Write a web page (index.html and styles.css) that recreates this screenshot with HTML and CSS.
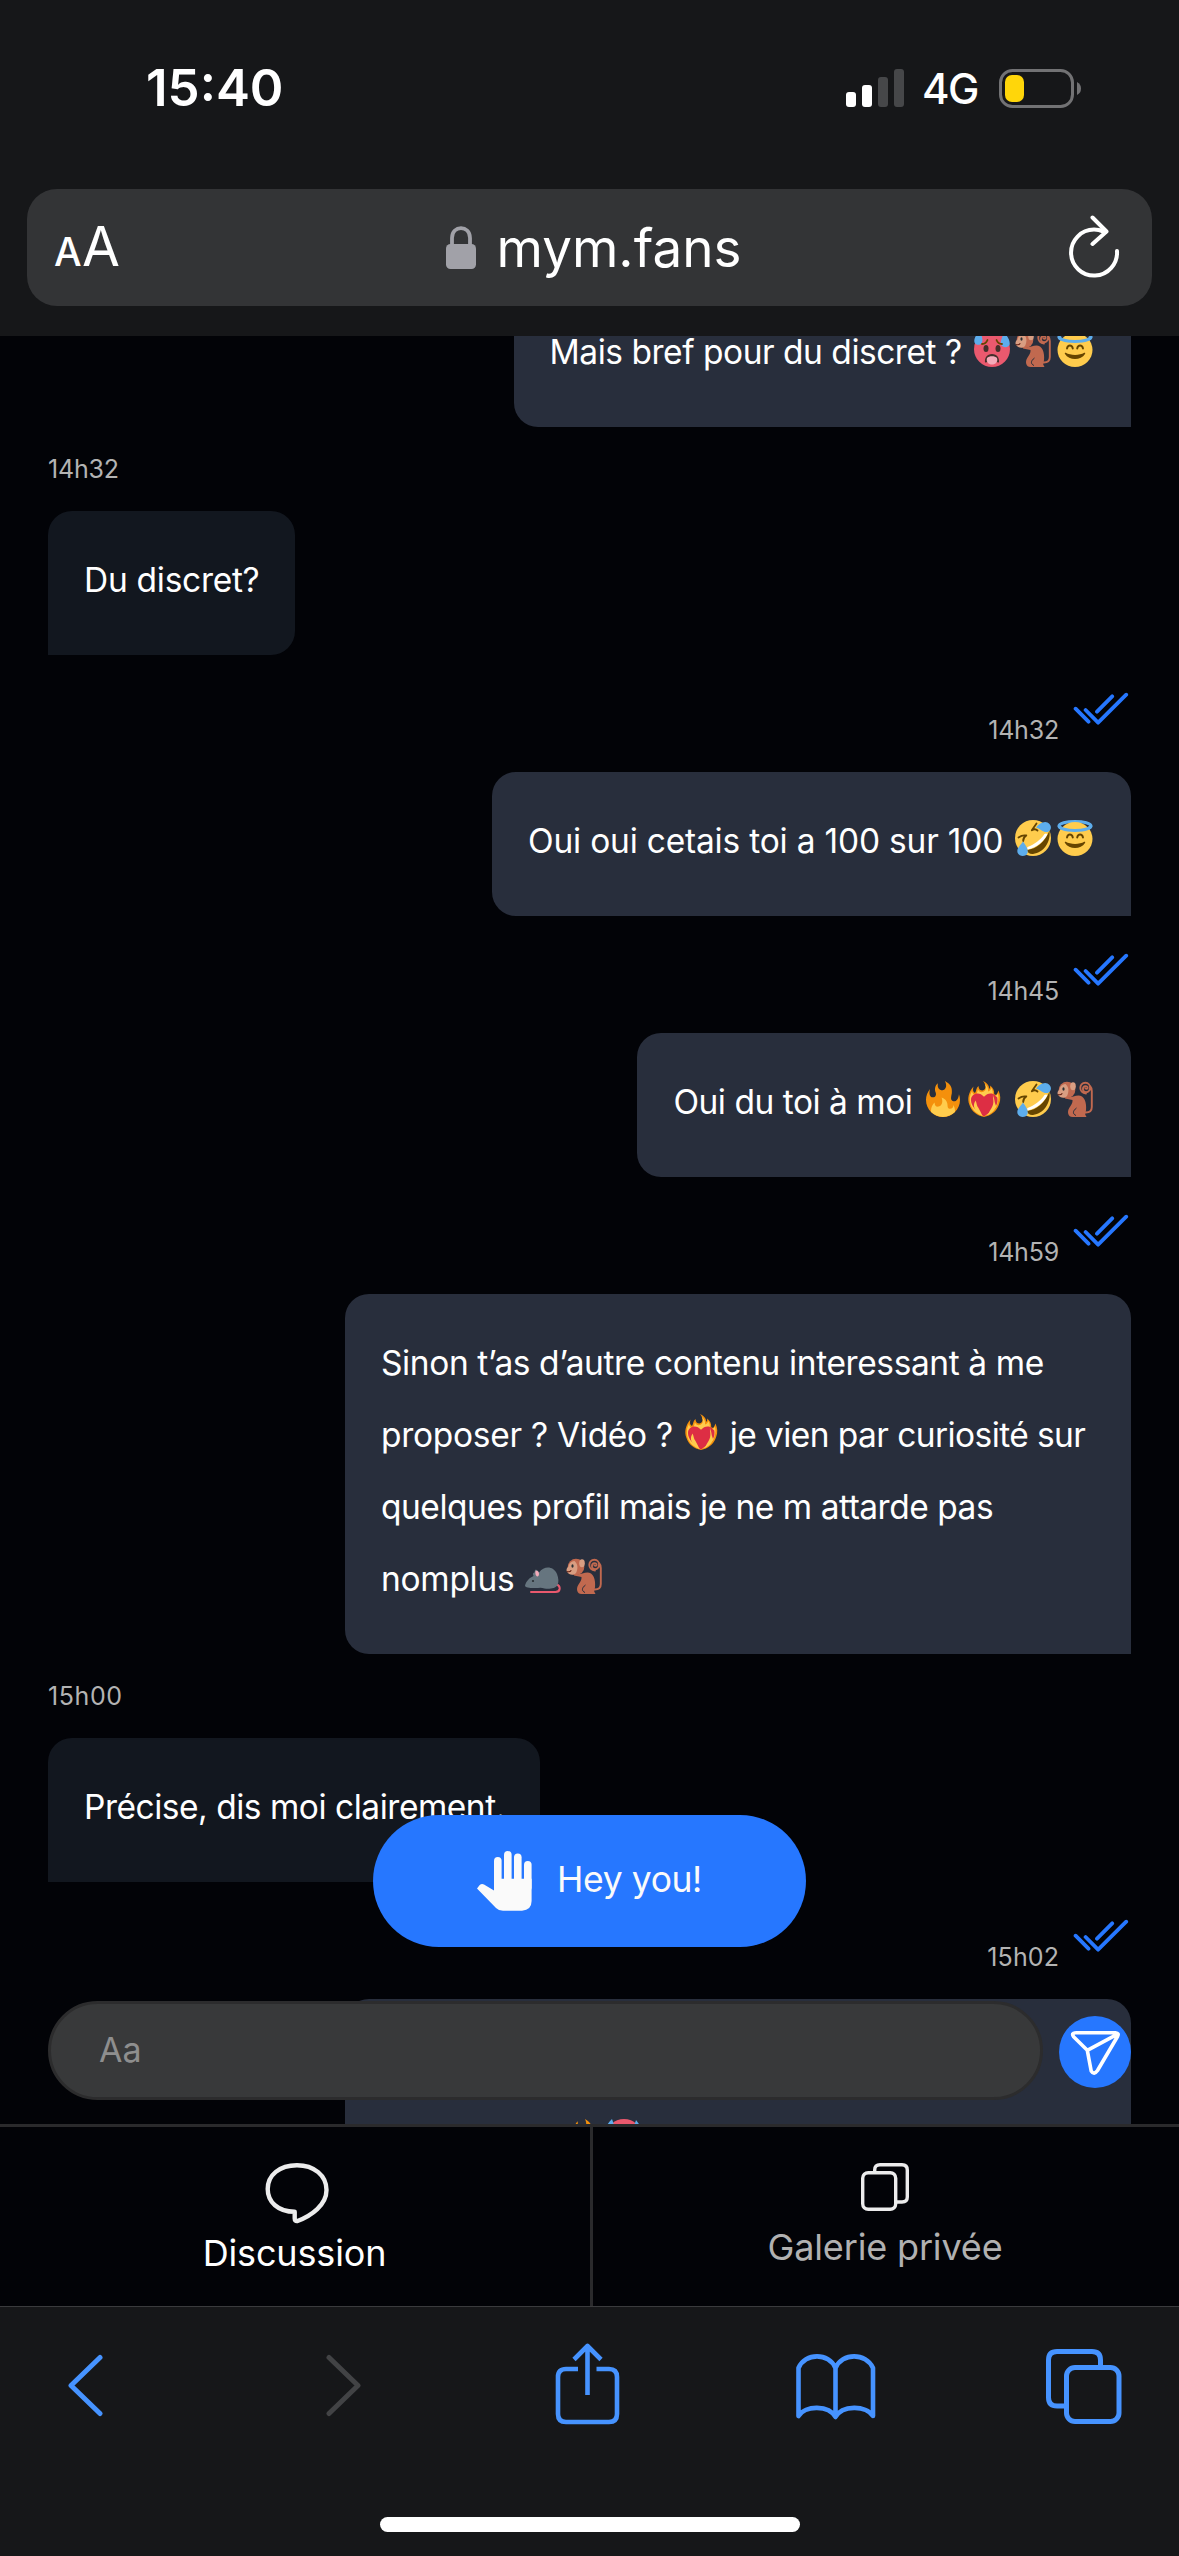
FILE: index.html
```html
<!DOCTYPE html>
<html lang="fr">
<head>
<meta charset="utf-8">
<title>mym.fans</title>
<link rel="stylesheet" href="styles.css">
</head>
<body>
<svg class="sprite" aria-hidden="true">
  <symbol id="checks" viewBox="0 0 56 33">
    <path d="M2.6 16.7L15.5 29.7M12.6 18L25.1 30.7L53.2 2.7M24 19.7L39.2 4.3" fill="none" stroke="#2677ff" stroke-width="3.8" stroke-linecap="round" stroke-linejoin="round"/>
  </symbol>
  <symbol id="fire" viewBox="0 0 36 36">
    <path fill="#f4900c" d="M35 19c0-2.062-.367-4.039-1.04-5.868-.46 5.389-3.333 8.157-6.335 6.868-2.812-1.208-.917-5.917-.777-8.164.236-3.809-.012-8.169-6.931-11.794 2.875 5.5.333 8.917-2.333 9.125-2.958.231-5.667-2.542-4.667-7.042-3.238 2.386-3.332 6.402-2.333 9 1.042 2.708-.042 4.958-2.583 5.208-2.84.28-4.418-3.041-2.963-8.333C2.52 10.965 1 14.805 1 19c0 9.389 7.611 17 17 17s17-7.611 17-17z"/>
    <path fill="#ffcc4d" d="M28.394 23.999c.148 3.084-2.561 4.293-4.019 3.709-2.106-.843-1.541-2.291-2.083-5.291s-2.625-5.083-5.708-6c2.25 6.333-1.247 8.667-3.08 9.084-1.872.426-3.753-.001-3.968-4.007C7.352 23.668 6 26.676 6 30c0 .368.023.73.055 1.09C9.125 34.124 13.342 36 18 36s8.875-1.876 11.945-4.91c.032-.36.055-.722.055-1.09 0-2.187-.584-4.236-1.606-6.001z"/>
  </symbol>
  <symbol id="heart-fire" viewBox="0 0 36 36">
    <path fill="#f4900c" d="M17 0c4 2 6.500 4.500 6 8 1-.8 1.500-2 1-3.500 3 2 4.500 5 4.200 8.500 1.500 1.500 2.500 1.500 4.300-3.500 2 4.500 2.500 9 .5 14C30.500 30.500 25 34.500 18 36 11 34.500 5.500 30.500 3.300 23.500 1.300 18 2.300 11.500 7.500 5.500 6.500 9 7 11 9 12c1.500-2.500 1-5 3.500-7 .2 3 1.500 4.500 4 4.500C20.500 8.500 20.500 4 17 0z"/>
    <path fill="#ffcc4d" d="M18.500 2.500c3 2.500 4 5 3.500 8 1.500-.5 3-2 3.500-3.500 1.500 2.500 1.500 5 1 7.500 2 1 4 .5 5.500-2 .8 3.500.8 7-.8 11C28.800 29.500 24.500 33.500 18 35 11 33.500 6.500 29.500 4.600 23.500 3.200 19 3.500 14 6 10c.3 2.500 1.500 3.500 3.500 4 2-2 2-4 2.300-5.500 1.200 2 2.700 3 5 2.500 3.200-1 4.200-4.500 1.700-8.500z"/>
    <path fill="#dd2e44" d="M18 35.500C10 30 5 25 5 19c0-7 8.500-9 13-3.200C22.500 10 31 12 31 19c0 6-5 11-13 16.500z"/>
    <path fill="#ffcc4d" d="M9.500 19.500c1.500 3 1 5 3 7.500 1.500 2.500 2.500 5 4 8C12 33 8.500 29 8 25.500c-.3-2.500.5-4 1.500-6zM27 13c-.5 4.500 1.500 7.500-.5 12-1.200 3-3.500 5.500-4.500 9 4.500-2.500 8.500-7 9.200-12C30 20 27 17.500 27 13z"/>
    <path fill="#dd2e44" d="M31 15.500c1 3.500.5 6.500-1 9.500-.8-2.800-2-4.500-1.500-8z"/>
  </symbol>
  <symbol id="rofl" viewBox="0 0 36 36">
    <circle cx="18" cy="18" r="18" fill="#ffcc4d"/>
    <path fill="#664500" d="M34.500 10.500C36 22 29 32.500 18 34c-3 .3-5.500-1-6-4 9-1 18-8 22.500-19.500z"/>
    <path fill="#fff" d="M32.300 14.500c-4 7.500-10.500 13-19.300 15-1-.5-1-1.500-.5-2.500C19.500 24.500 25.500 20 29.500 14c1-.8 2.300-.8 2.800.5z"/>
    <path fill="none" stroke="#664500" stroke-width="1.800" stroke-linecap="round" stroke-linejoin="round" d="M21.500 3.500L16.800 10.300C19 8.800 21 9 22.500 10.500M3.500 17.500C6.500 15.300 9 15 11.300 15.500 9 17 8 18.500 8.200 21"/>
    <path fill="#5dadec" d="M21 7.500C24 3.500 29 .8 32.500 2.500c4 2 4.500 6.500 1.500 8.700-4.500 2.700-8-2-13-3.700zM8 21.500c3 4 6 8.500 4.200 12.200-2.200 3.300-7.700 2.800-9.500-.7C1 28.500 5.500 25.500 8 21.500z"/>
  </symbol>
  <symbol id="halo" viewBox="0 0 36 36">
    <ellipse cx="18" cy="6" rx="16" ry="4.500" fill="none" stroke="#5dadec" stroke-width="3"/>
    <ellipse cx="18" cy="19" rx="17.500" ry="17" fill="#ffcc4d"/>
    <path fill="none" stroke="#5dadec" stroke-width="3" d="M2 5.500C3 12 33 12 34 5.500"/>
    <path fill="none" stroke="#664500" stroke-width="1.900" stroke-linecap="round" d="M10 17.500C10.800 13.500 15 13.500 15.800 17.500M20.200 17.500C21 13.500 25.200 13.500 26 17.500"/>
    <path fill="#664500" d="M8.800 21.800c4.500 2.800 14 2.800 18.400 0 1-.3 1.300.5.800 1.300-4 6.600-16 6.600-20 0-.5-.8-.2-1.600.8-1.300z"/>
  </symbol>
  <symbol id="hot" viewBox="0 0 36 36">
    <circle cx="18" cy="18" r="18" fill="#ea596e"/>
    <path fill="#5dadec" d="M6 0C2 3.500-.5 8 .5 11.500c1.500 3.500 7 3 7.800-1C9 7 7 3.500 6 0zM30 1c3 4 6.500 8.500 5.600 12.500-1.500 3.500-7 3.500-8.600 0C26 9.500 29 5 30 1z"/>
    <path fill="none" stroke="#664500" stroke-width="1.800" stroke-linecap="round" d="M8 13c3 0 4.500-1.500 5.500-4M28 13c-3 0-4.500-1.500-5.500-4"/>
    <ellipse cx="12" cy="17.500" rx="2.500" ry="3.500" fill="#442f2a"/><ellipse cx="24" cy="17.500" rx="2.500" ry="3.500" fill="#442f2a"/>
    <path fill="#442f2a" d="M18 23c5 0 7.500 4 7 8.500-4-1-10-1-14 0C10.500 27 13 23 18 23z"/>
    <path fill="#f4abba" d="M13 27c2-2.500 8-2.500 10 0 1.200 4-1.500 6.500-5 6.500S11.800 31 13 27z"/>
  </symbol>
  <symbol id="monkey" viewBox="0 0 36 36">
    <path fill="none" stroke="#c1694f" stroke-width="1.900" stroke-linecap="round" stroke-linejoin="round" d="M28.500 7.500C31 9 31.500 5 28.500 5.200C25 5.500 25 11 29 11.200C34.500 11.200 34.500 1.800 28.500 1.800C21.500 1.800 21.500 12 29 12.500M33 5Q34.800 7 34.800 10V26c0 3.500-2 5.500-6 5.500"/>
    <circle cx="10" cy="9" r="8.300" fill="#c1694f"/>
    <path fill="#c1694f" d="M8 16C14 18 20 12.500 25 15.500c4.500 3 5 12.500 3.200 18L29.500 36H15.500C11 36 10 31 12 27.500c1.500-3 3.800-5 3.500-8.500L8 17.500z"/>
    <path fill="none" stroke="#282e3c" stroke-width="1" d="M19.500 27c-4 3-4 6-.5 7.500"/>
    <path fill="#d99e82" d="M8.500 3C4.500 3.500 3 6 2.500 8.500.5 10 0 12 1 13.800 3 17.500 9 18 10.500 14c1.500-4 1.500-8-2-11z"/>
    <ellipse cx="16" cy="5.300" rx="2.800" ry="4" fill="#d99e82"/>
    <ellipse cx="6.500" cy="8" rx="1.100" ry="1.700" fill="#292f33"/>
    <path fill="none" stroke="#662113" stroke-width="1.100" d="M.8 13.500Q4 14.500 5.300 12.200"/>
  </symbol>
  <symbol id="mouse" viewBox="0 0 36 36">
    <path fill="none" stroke="#ea596e" stroke-width="2" stroke-linecap="round" d="M32 26.500c4 2 3.500 7.500-1.500 7.500H6"/>
    <path fill="#66757f" d="M0 27.500c1.500-5 5-8 8.500-9.500-1-2-.5-3.500 1-3.500l.5-2.500c2-1 3 1 4 2.500C19 8 28 7.500 32 16c1.500 4 2 8 .5 11-2 4-9 4-13 3.500C15 29 13 30.500 9 30 4.500 30 0 29.500 0 27.500z"/>
    <path fill="#f4abba" d="M10.500 13c2-1 3.500 1 3.500 3 0 1.500-1 3-2 2.500-1.500-1-2-3.500-1.500-5.500z"/>
    <circle cx="8" cy="23" r="1.100" fill="#292f33"/>
  </symbol>
</svg>

<header class="browser-top">
  <div class="status">
    <span class="clock">15:40</span>
    <div class="status-right">
      <svg class="signal" width="58" height="38" viewBox="0 0 58 38"><g fill="#fff"><rect y="23" width="10" height="15" rx="3"/><rect x="16" y="16" width="10" height="22" rx="3"/></g><g fill="#464749"><rect x="32" y="8" width="10" height="30" rx="3"/><rect x="48" width="10" height="38" rx="3"/></g></svg>
      <span class="network">4G</span>
      <svg class="battery" width="83" height="39" viewBox="0 0 83 39"><rect x="1.500" y="1.500" width="72" height="36" rx="12" fill="none" stroke="#727274" stroke-width="3"/><rect x="6" y="6" width="19" height="27" rx="7" fill="#ffd60a"/><path d="M78 13q4 2 4 6.500t-4 6.500z" fill="#727274"/></svg>
    </div>
  </div>
  <div class="url-bar">
    <span class="reader"><span class="small-a">A</span><span class="big-a">A</span></span>
    <span class="address">
      <svg width="30" height="43" viewBox="0 0 30 43"><rect y="18" width="30" height="25" rx="4.500" fill="#a1a1a8"/><path d="M6 19V12C6 -1.300 24 -1.300 24 12V19" fill="none" stroke="#a1a1a8" stroke-width="3.800"/></svg>
      <span class="domain">mym.fans</span>
    </span>
    <svg class="reload" width="54" height="64" viewBox="0 0 54 64"><path d="M36 17.500C33 16 30 15.600 27 15.600A23 23 0 1 0 50 37M25.500 3.500L39.500 17.500L25.500 30" fill="none" stroke="#fff" stroke-width="4" stroke-linecap="round" stroke-linejoin="round"/></svg>
  </div>
</header>

<main class="chat">
  <div class="thread">
    <div class="bubble mine"><span class="tight">Mais bref pour du discret ?</span> <svg class="emoji"><use href="#hot"/></svg><svg class="emoji"><use href="#monkey"/></svg><svg class="emoji"><use href="#halo"/></svg></div>

    <div class="meta">14h32</div>
    <div class="bubble theirs"><span class="snug">Du discret?</span></div>

    <div class="meta sent"><span>14h32</span><svg class="checks"><use href="#checks"/></svg></div>
    <div class="bubble mine"><span class="oui">Oui oui cetais toi a 100 sur 100</span> <svg class="emoji"><use href="#rofl"/></svg><svg class="emoji"><use href="#halo"/></svg></div>

    <div class="meta sent"><span>14h45</span><svg class="checks"><use href="#checks"/></svg></div>
    <div class="bubble mine"><span class="tight">Oui du toi à moi</span> <svg class="emoji"><use href="#fire"/></svg><svg class="emoji"><use href="#heart-fire"/></svg><span class="thin"> </span><svg class="emoji"><use href="#rofl"/></svg><svg class="emoji"><use href="#monkey"/></svg></div>

    <div class="meta sent"><span>14h59</span><svg class="checks"><use href="#checks"/></svg></div>
    <div class="bubble mine wide"><span class="sinon">Sinon t’as d’autre contenu interessant à me</span><br><span class="snug">proposer ? Vidéo ?</span><span class="thin"> </span><svg class="emoji"><use href="#heart-fire"/></svg><span class="thin"> </span><span class="curieux">je vien par curiosité sur</span><br><span class="tight">quelques profil mais je ne m attarde pas</span><br><span class="snug">nomplus</span><span class="thin"> </span><svg class="emoji"><use href="#mouse"/></svg><svg class="emoji"><use href="#monkey"/></svg></div>

    <div class="meta loose">15h00</div>
    <div class="bubble theirs"><span class="tight">Précise, dis moi clairement.</span></div>

    <div class="meta sent"><span class="zero">15h02</span><svg class="checks"><use href="#checks"/></svg></div>
    <div class="bubble mine wide last"><br><svg class="emoji"><use href="#fire"/></svg><svg class="emoji"><use href="#hot"/></svg></div>
  </div>

  <button class="hey">
    <svg width="55" height="60" viewBox="0 0 55 60" fill="#fafafa"><rect x="17" y="6" width="7.600" height="30" rx="3.800"/><rect x="27" width="7.600" height="36" rx="3.800"/><rect x="37" y="2.500" width="7.600" height="32" rx="3.800"/><rect x="47" y="10" width="7.600" height="30" rx="3.800"/><path d="M17 39.500L7 33.400Q4.500 32.200 2.500 34.300L0 37.500L19 57Q21.500 59.700 26 59.700H45Q54.600 59 54.600 50V27.700H17Z"/></svg>
    <span>Hey you!</span>
  </button>

  <div class="composer">
    <div class="field">Aa</div>
    <svg class="send" width="72" height="72" viewBox="0 0 72 72"><circle cx="36" cy="36" r="36" fill="#2677ff"/><path d="M16.500 16.700H56.500Q60.500 17 58.500 20.500L38.500 54.500Q35 59.500 32.200 55L28.300 34.300L14.600 20.700Q12 17 16.500 16.700M28.300 34.300L58.500 18.200" fill="none" stroke="#fff" stroke-width="3.600" stroke-linejoin="round"/></svg>
  </div>
</main>

<nav class="tabs">
  <div class="tab active">
    <svg width="68" height="66" viewBox="0 0 68 66"><path d="M34 5.200C51 5.200 63.500 15.500 63.500 30C63.500 45 48.500 55.500 34.500 61Q31.700 61.500 31.700 58.500V51.800C15 51.800 4.700 42 4.700 29C4.700 15 16.500 5.200 34 5.200Z" fill="none" stroke="#ececec" stroke-width="4.400" stroke-linejoin="round"/></svg>
    <span>Discussion</span>
  </div>
  <div class="tab">
    <svg width="48" height="48" viewBox="0 0 48 48" fill="none" stroke="#ececec" stroke-width="3.400"><rect x="1.700" y="9.700" width="33" height="36.600" rx="5.500"/><path d="M13.700 9.700V7Q13.700 1.700 19 1.700H41Q46.300 1.700 46.300 7V34Q46.300 39 41 39H35"/></svg>
    <span>Galerie privée</span>
  </div>
</nav>

<footer class="browser-bottom">
  <div class="tools">
    <svg width="36" height="84" viewBox="0 0 36 84"><path d="M33 15.500L4 43.500L33 71.500" fill="none" stroke="#4693ff" stroke-width="5" stroke-linecap="round" stroke-linejoin="round"/></svg>
    <svg width="36" height="84" viewBox="0 0 36 84"><path d="M4 15.500L33 43.500L4 71.500" fill="none" stroke="#424345" stroke-width="5" stroke-linecap="round" stroke-linejoin="round"/></svg>
    <svg width="66" height="84" viewBox="0 0 66 84"><path d="M23 27H11Q3 27 3 35V72Q3 80 11 80H54Q62 80 62 72V35Q62 27 54 27H41.500M32.500 53V4.500M19 17.500L32.500 4L46 17.500" fill="none" stroke="#4693ff" stroke-width="4.600" stroke-linecap="butt" stroke-linejoin="round"/></svg>
    <svg width="80" height="84" viewBox="0 0 80 84"><path d="M2.500 74V26C9 10.500 33 10.500 39.500 26C46 10.500 70 10.500 77 26V74C70 63 46 63 39.500 75C33 63 9 63 2.500 74ZM39.500 26V75" fill="none" stroke="#4693ff" stroke-width="4.600" stroke-linejoin="round"/></svg>
    <svg width="76" height="84" viewBox="0 0 76 84"><path d="M18 64H11Q2.500 64 2.500 55.500V18Q2.500 9.500 11 9.500H46Q54.500 9.500 54.500 18V25.500" fill="none" stroke="#4693ff" stroke-width="5"/><rect x="20.500" y="25.500" width="52.500" height="54" rx="8.500" fill="none" stroke="#4693ff" stroke-width="5"/></svg>
  </div>
  <div class="home-bar"></div>
</footer>
</body>
</html>
```
FILE: styles.css
```css
* { box-sizing: border-box; }

body {
  margin: 0;
  width: 1179px;
  height: 2556px;
  display: flex;
  flex-direction: column;
  overflow: hidden;
  background: #020307;
  color: #fff;
  font-family: Inter, "Liberation Sans", sans-serif;
}

svg { display: block; flex: none; }
.sprite { position: absolute; width: 0; height: 0; }

/* Browser header */
.browser-top {
  position: relative;
  z-index: 2;
  flex: none;
  height: 336px;
  padding: 0 27px;
  background: #161719;
}
.status {
  height: 189px;
  padding: 57px 70px 0 119px;
  display: flex;
  justify-content: space-between;
  align-items: flex-start;
}
.clock { font-size: 51px; font-weight: 600; line-height: 62px; }
.status-right { display: flex; align-items: center; height: 62px; }
.signal { margin-right: 18px; }
.network { width: 77px; font-size: 42px; font-weight: 500; letter-spacing: -1.5px; line-height: 62px; margin-top: 2px; }
.url-bar {
  height: 117px;
  padding: 0 31px 0 27px;
  border-radius: 30px;
  background: #333436;
  display: grid;
  grid-template-columns: 1fr auto 1fr;
  align-items: center;
}
.reader { display: flex; align-items: baseline; line-height: 60px; margin-top: 3px; font-weight: 500; }
.small-a { width: 28px; font-size: 39px; letter-spacing: -1px; }
.big-a { font-size: 55px; font-weight: 400; }
.address { display: flex; align-items: center; gap: 21px; margin-left: 12px; }
.domain { font-size: 53px; line-height: 62px; letter-spacing: 0; margin-top: 0; }
.reload { justify-self: end; margin-top: -4px; }

/* Conversation */
.chat { position: relative; flex: none; height: 1788px; overflow: hidden; }
.thread {
  margin-top: -53px;
  padding: 0 48px;
  display: flex;
  flex-direction: column;
  align-items: flex-start;
}
.bubble {
  flex: none;
  padding: 33px 35.5px 39px 36px;
  font-size: 33.5px;
  line-height: 72px;
  white-space: nowrap;
}
.theirs { background: #12171f; border-radius: 24px 24px 24px 0; }
.mine { align-self: flex-end; background: #282e3c; border-radius: 24px 24px 0 24px; }
.wide { width: 786px; }
.last { height: 216px; padding-left: 217px; }
.tight { letter-spacing: -0.48px; }
.snug { letter-spacing: -0.28px; }
.oui { letter-spacing: -0.2px; }
.sinon { letter-spacing: -0.39px; }
.curieux { letter-spacing: -0.58px; }
.thin { letter-spacing: -1.8px; }
.emoji {
  display: inline-block;
  width: 36px;
  height: 36px;
  margin: 15px 2.75px 0;
  vertical-align: top;
}
.meta {
  flex: none;
  display: flex;
  font-size: 25px;
  line-height: 84px;
  letter-spacing: -0.2px;
  color: #b3b3b3;
}
.sent { align-self: flex-end; height: 117px; padding: 33px 2px 0 0; }
.loose { letter-spacing: 0.6px; }
.zero { letter-spacing: 0.1px; }
.checks { width: 56px; height: 33px; margin: 4px 0 0 14px; }

.hey {
  position: absolute;
  left: 373px;
  top: 1479px;
  width: 433px;
  height: 132px;
  padding: 0;
  border: 0;
  border-radius: 66px;
  background: #2677ff;
  color: #fafafa;
  font: 400 35.500px/60px Inter, "Liberation Sans", sans-serif;
  letter-spacing: -0.4px;
  display: flex;
  align-items: center;
  justify-content: center;
  gap: 25px;
}
.hey span { margin-top: -2px; }
.composer {
  position: absolute;
  left: 48px;
  right: 48px;
  bottom: 24px;
  display: flex;
  align-items: center;
  justify-content: space-between;
}
.field {
  width: 995px;
  height: 99px;
  padding: 0 48px;
  border: 3px solid #2c2c2d;
  border-radius: 50px;
  background: #38393a;
  color: #8e8e8e;
  font-size: 34px;
  line-height: 91px;
}
.send { margin-top: 3px; }

/* Section tabs */
.tabs {
  flex: none;
  height: 183px;
  display: grid;
  grid-template-columns: 593px 1fr;
  border-top: 3px solid #2a2a2c;
  border-bottom: 1px solid #3a3b3d;
}
.tab {
  display: flex;
  flex-direction: column;
  align-items: center;
  padding: 36px 2px 0 0;
  font-size: 36px;
  line-height: 44px;
  color: #b1b1b1;
}
.tab span { margin-top: 14px; letter-spacing: -0.15px; }
.tab.active { padding: 33px 0 0 4px; border-right: 3px solid #2a2a2c; color: #fff; }
.tab.active span { margin: 5px 5px 0 0; }

/* Browser toolbar */
.browser-bottom { flex: auto; background: #161719; }
.tools {
  padding: 35px 0 0 67px;
  display: grid;
  grid-template-columns: 258px 230px 241px 250px auto;
}
.home-bar {
  width: 420px;
  height: 15px;
  margin: 91px 0 0 380px;
  border-radius: 8px;
  background: #fff;
}
```
